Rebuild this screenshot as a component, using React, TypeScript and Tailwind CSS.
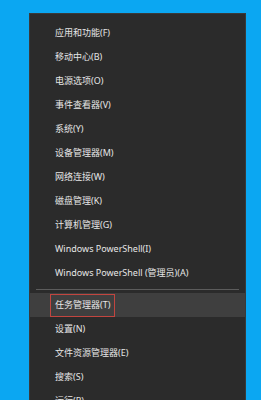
const topItems = [
  "应用和功能(F)",
  "移动中心(B)",
  "电源选项(O)",
  "事件查看器(V)",
  "系统(Y)",
  "设备管理器(M)",
  "网络连接(W)",
  "磁盘管理(K)",
  "计算机管理(G)",
  "Windows PowerShell(I)",
  "Windows PowerShell (管理员)(A)",
];

const bottomItems = ["任务管理器(T)", "设置(N)", "文件资源管理器(E)", "搜索(S)", "运行(R)"];

function MenuRow({ label, active = false }: { label: string; active?: boolean }) {
  return (
    <li className={`flex h-6 items-center pl-[25px] ${active ? "bg-[#3f3f3f]" : ""}`}>
      {active ? (
        <span className="-ml-[5px] flex h-[23px] items-center border border-[#c2453f] px-[4px]">{label}</span>
      ) : (
        <span>{label}</span>
      )}
    </li>
  );
}

export default function App() {
  return (
    <div
      className="h-[400px] w-[261px] overflow-hidden bg-[#0ba7f2] pt-[13px] pl-[29px]"
      style={{ fontFamily: '"Noto Sans", "Noto Sans CJK SC", sans-serif' }}
    >
      <div className="h-[420px] w-[217px] border border-[#3a3a3a] bg-[#2b2b2b] pt-[7px] text-[9px] text-[#e6e6e6]">
        <ul>
          {topItems.map((label) => (
            <MenuRow key={label} label={label} />
          ))}
        </ul>
        <div className="flex h-2 items-center px-[6px]">
          <div className="h-px w-full bg-[#5c5c5c]" />
        </div>
        <ul>
          {bottomItems.map((label, i) => (
            <MenuRow key={label} label={label} active={i === 0} />
          ))}
        </ul>
      </div>
    </div>
  );
}
